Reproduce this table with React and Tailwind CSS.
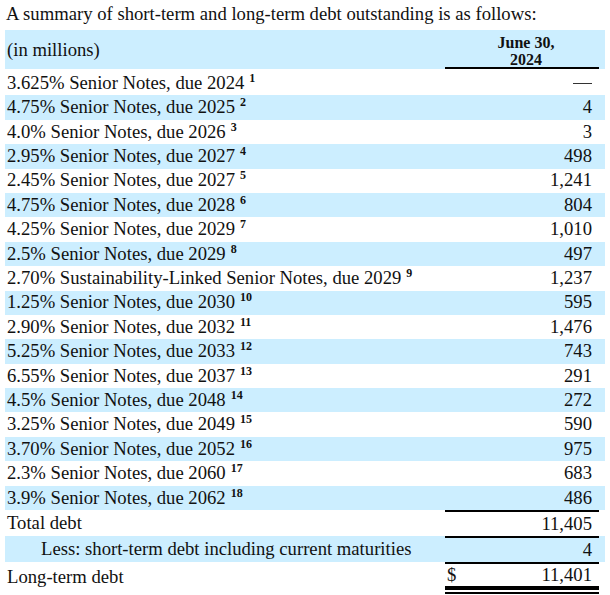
const notes = [
  ["3.625% Senior Notes, due 2024", "1", "—"],
  ["4.75% Senior Notes, due 2025", "2", "4"],
  ["4.0% Senior Notes, due 2026", "3", "3"],
  ["2.95% Senior Notes, due 2027", "4", "498"],
  ["2.45% Senior Notes, due 2027", "5", "1,241"],
  ["4.75% Senior Notes, due 2028", "6", "804"],
  ["4.25% Senior Notes, due 2029", "7", "1,010"],
  ["2.5% Senior Notes, due 2029", "8", "497"],
  ["2.70% Sustainability-Linked Senior Notes, due 2029", "9", "1,237"],
  ["1.25% Senior Notes, due 2030", "10", "595"],
  ["2.90% Senior Notes, due 2032", "11", "1,476"],
  ["5.25% Senior Notes, due 2033", "12", "743"],
  ["6.55% Senior Notes, due 2037", "13", "291"],
  ["4.5% Senior Notes, due 2048", "14", "272"],
  ["3.25% Senior Notes, due 2049", "15", "590"],
  ["3.70% Senior Notes, due 2052", "16", "975"],
  ["2.3% Senior Notes, due 2060", "17", "683"],
  ["3.9% Senior Notes, due 2062", "18", "486"],
];

function Row({ label, note, value, blue }) {
  return (
    <div className={`flex h-[24.4px] items-center ${blue ? "bg-[#cceeff]" : ""}`}>
      <div className="w-[430px] pl-[2px] whitespace-nowrap">
        {label}
        <sup className="ml-[5px] text-[12px] font-bold -top-[7px]">{note}</sup>
      </div>
      <div className="flex-1 pr-[13px] text-right">
        {value === "—" ? <span className="inline-block w-[19px] h-px bg-[#333] align-middle mb-[2px]" /> : value}
      </div>
    </div>
  );
}

export default function App() {
  return (
    <div className="px-[5px] pt-[4px] text-[18.67px] leading-none text-[#111] font-['Liberation_Serif',serif]">
      <p className="h-[26px] pl-[1px] pt-[1px]">A summary of short-term and long-term debt outstanding is as follows:</p>

      <div className="flex h-[39px] bg-[#cceeff]">
        <div className="w-[430px] pl-[2px] pt-[11px]">(in millions)</div>
        <div className="flex-1 pl-[10px] pr-[6px]">
          <div className="h-full border-b-2 border-black text-center text-[16px] font-bold leading-[17px] pt-[4px] pl-[8px]">
            June 30,
            <br />
            2024
          </div>
        </div>
      </div>

      <div className="pt-[2px]">
        {notes.map(([label, note, value], i) => (
          <Row key={label} label={label} note={note} value={value} blue={i % 2 === 1} />
        ))}
      </div>

      <div className="flex h-[26px] items-center">
        <div className="w-[430px] pl-[2px]">Total debt</div>
        <div className="flex-1 pl-[10px] pr-[6px] h-full">
          <div className="h-full border-t-2 border-black flex items-center justify-end pr-[7px]">11,405</div>
        </div>
      </div>
      <div className="flex h-[26px] items-center bg-[#cceeff]">
        <div className="w-[430px] pl-[36px]">Less: short-term debt including current maturities</div>
        <div className="flex-1 pl-[10px] pr-[6px] h-full">
          <div className="h-full border-t-2 border-black flex items-center justify-end pr-[7px]">4</div>
        </div>
      </div>
      <div className="flex h-[32px]">
        <div className="w-[430px] pl-[2px] pt-[6px]">Long-term debt</div>
        <div className="flex-1 pl-[10px] pr-[6px] h-full">
          <div className="h-full border-t-2 border-b-[6px] border-double border-black">
            <div className="h-full border-b-2 border-black flex justify-between items-center px-[2px] pr-[7px]">
              <span>$</span>
              <span>11,401</span>
            </div>
          </div>
        </div>
      </div>
    </div>
  );
}
